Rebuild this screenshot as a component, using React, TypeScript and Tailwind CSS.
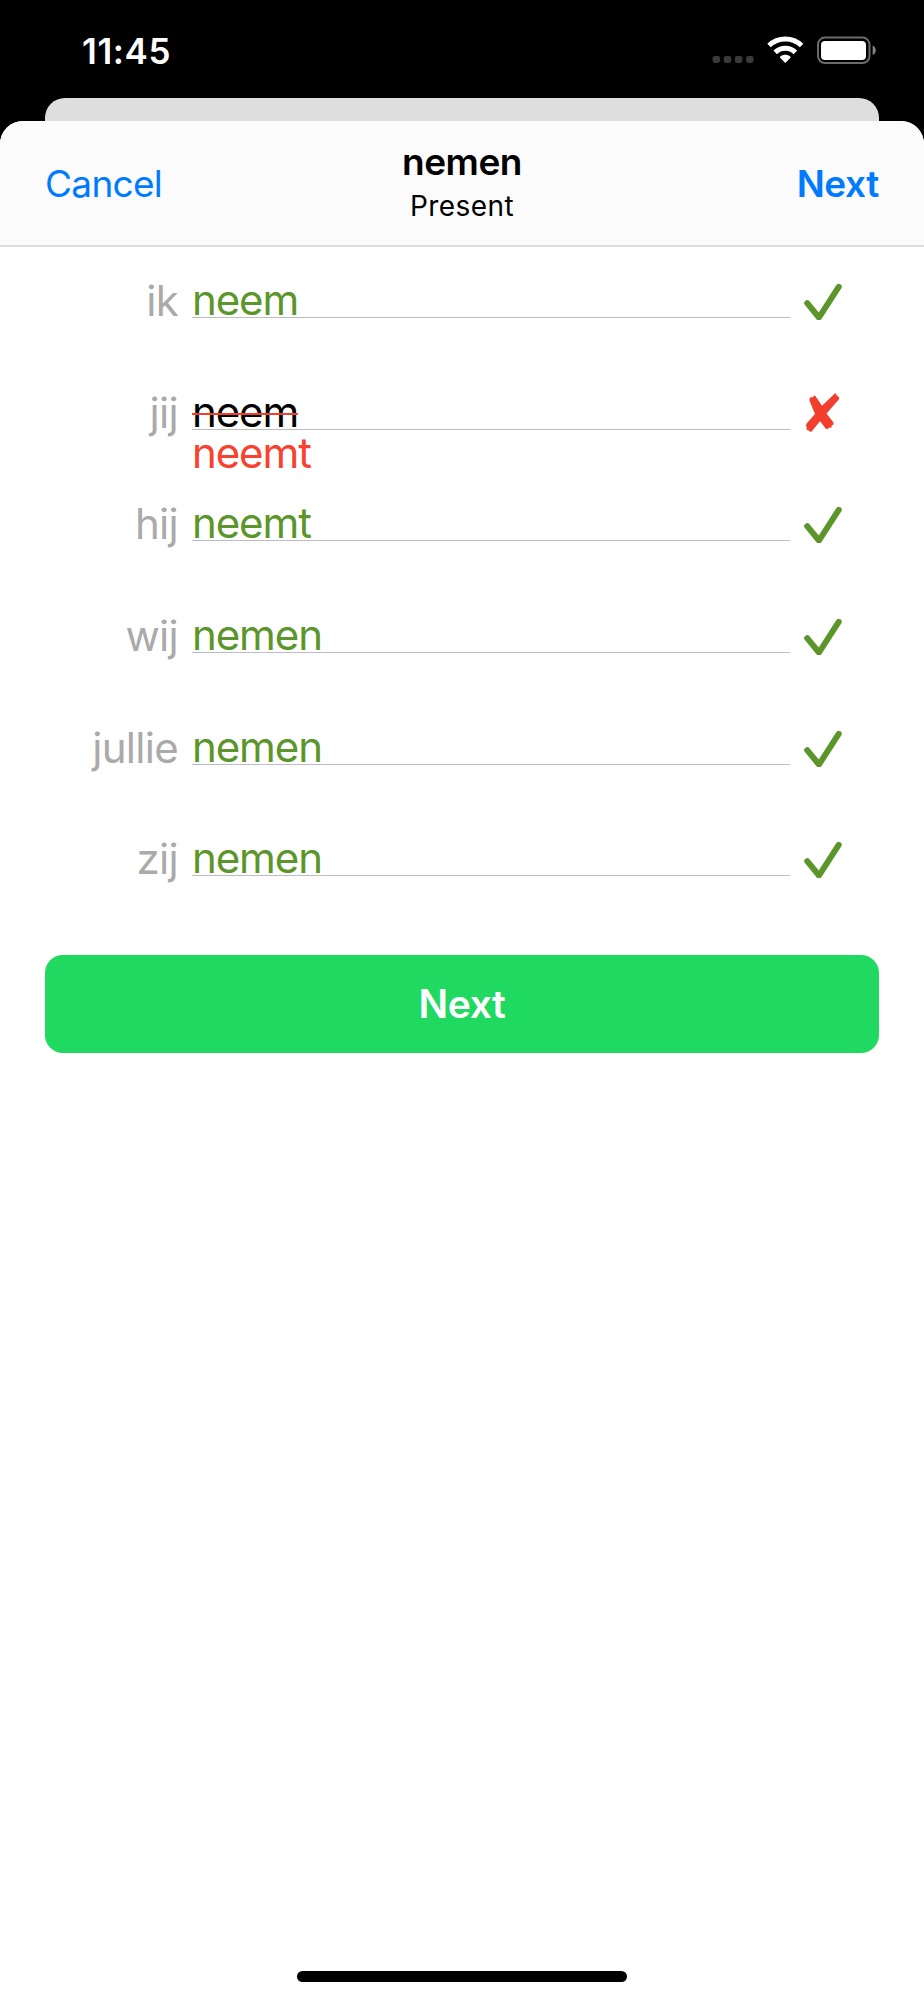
type Conjugation = {
  pronoun: string;
  answer: string;
  correction?: string;
};

const conjugations: Conjugation[] = [
  { pronoun: "ik", answer: "neem" },
  { pronoun: "jij", answer: "neem", correction: "neemt" },
  { pronoun: "hij", answer: "neemt" },
  { pronoun: "wij", answer: "nemen" },
  { pronoun: "jullie", answer: "nemen" },
  { pronoun: "zij", answer: "nemen" },
];

function StatusBar() {
  return (
    <div className="flex h-[98px] items-start justify-between pl-[82px] pr-12 text-white">
      <span className="mt-[30px] text-[35px] leading-[43px] font-semibold tracking-[0.6px]">11:45</span>
      <svg className="mt-9 h-7 w-[164px]" viewBox="0 0 164 28" fill="none">
        <g fill="#3a3a3a">
          <rect x="0.5" y="20" width="7.6" height="7" rx="2.4" />
          <rect x="11.7" y="20" width="7.6" height="7" rx="2.4" />
          <rect x="22.8" y="20" width="7.6" height="7" rx="2.4" />
          <rect x="34" y="20" width="7.6" height="7" rx="2.4" />
        </g>
        {/* wifi */}
        <g stroke="#fff" strokeWidth="5">
          <path d="M57 9.5a23.6 23.6 0 0 1 32.6 0" />
          <path d="M63.2 16.4a14.4 14.4 0 0 1 20.2 0" />
        </g>
        <path d="M73.3 27 68.4 22.1c-.6-.6-.5-1.3.2-1.8 2.8-2 6.6-2 9.4 0 .7.5.8 1.2.2 1.8Z" fill="#fff" />
        {/* battery */}
        <rect x="106" y="1.6" width="51.5" height="25.4" rx="7" stroke="#6b6b6b" strokeWidth="2" />
        <rect x="109" y="5" width="45" height="19" rx="4" fill="#fff" />
        <path d="M160.7 9.5c4 1.4 4 8.2 0 9.6Z" fill="#858585" />
      </svg>
    </div>
  );
}

function CheckIcon() {
  return (
    <svg className="h-10 w-10" viewBox="0 0 40 40" fill="none">
      <path d="M5.2 23.2 17 37.5 36.7 6.8" stroke="#5c962b" strokeWidth="6" strokeLinecap="round" strokeLinejoin="round" />
    </svg>
  );
}

function CrossIcon() {
  return (
    <svg className="h-10 w-10" viewBox="0 0 40 40">
      <path
        d="M7.5 6.2 9.3 5 10.5 5.4 12.2 3.6 13.4 4 20 13.8 32.8 1.5 34 1.5 34.4 3 37.3 5.6 36.8 7.6 24.6 21.5 31.4 30.4 31.6 32.3 29.6 33.8 29.4 36 27.3 35.4 25.8 37 23.8 36.7 18 29.2 9.2 40 7.4 39.2 6 38 4.2 37.8 5 35.5 3.8 34 4.8 31.2 13 22 7.6 9Z"
        fill="#f23f2d"
      />
    </svg>
  );
}

function ConjugationRow({ pronoun, answer, correction }: Conjugation) {
  return (
    <li className="flex h-[111.7px] items-start">
      <span className="w-[178px] pt-px text-right text-[42px] leading-[50px] tracking-[-0.7px] text-[#aaaaaa]">
        {pronoun}
      </span>
      <div className="ml-[14px] w-[598px] text-[42px] tracking-[-1.1px]">
        <div className="h-[43px] border-b border-[#bdbdbd] leading-[50px]">
          {correction ? (
            <span className="relative inline-block text-black">
              {answer}
              <span className="absolute inset-x-0 top-[26px] h-[2px] bg-[#f23f2d]" />
            </span>
          ) : (
            <span className="text-[#5c962b]">{answer}</span>
          )}
        </div>
        {correction && <div className="-mt-[2px] leading-[50px] text-[#f9412f]">{correction}</div>}
      </div>
      <div className="mt-[5px] ml-[12px]">{correction ? <CrossIcon /> : <CheckIcon />}</div>
    </li>
  );
}

export default function App() {
  return (
    <div className="flex h-[2000px] w-[924px] flex-col overflow-hidden bg-black font-['Inter',sans-serif]">
      <StatusBar />
      <div className="mx-[45px] h-[23px] shrink-0 rounded-t-[20px] bg-[#dedede]" />
      <main className="flex flex-1 flex-col rounded-t-[23px] bg-white">
        <header className="flex h-[126px] items-center justify-between rounded-t-[23px] border-b-2 border-[#dddddd] bg-[#fbfbfb] px-[45px]">
          <button className="w-[180px] pt-px text-left text-[37px] leading-[46px] tracking-[-0.7px] text-[#007aff]">
            Cancel
          </button>
          <div className="text-center text-black">
            <h1 className="text-[37px] leading-[44px] font-semibold tracking-[-0.5px]">nemen</h1>
            <p className="pt-[2px] text-[28px] leading-[40px] tracking-[0.4px]">Present</p>
          </div>
          <button className="w-[180px] pt-px text-right text-[37px] leading-[46px] font-semibold tracking-[-0.4px] text-[#007aff]">
            Next
          </button>
        </header>
        <ul className="mt-[28px] shrink-0">
          {conjugations.map((row) => (
            <ConjugationRow key={row.pronoun} {...row} />
          ))}
        </ul>
        <button className="mx-[45px] mt-[10px] h-[98px] shrink-0 rounded-[18px] bg-[#1fd960] pt-px text-[39px] font-semibold tracking-[-0.4px] text-white">
          Next
        </button>
        <div className="mx-auto mt-auto mb-[18px] h-[11px] w-[330px] rounded-full bg-black" />
      </main>
    </div>
  );
}
